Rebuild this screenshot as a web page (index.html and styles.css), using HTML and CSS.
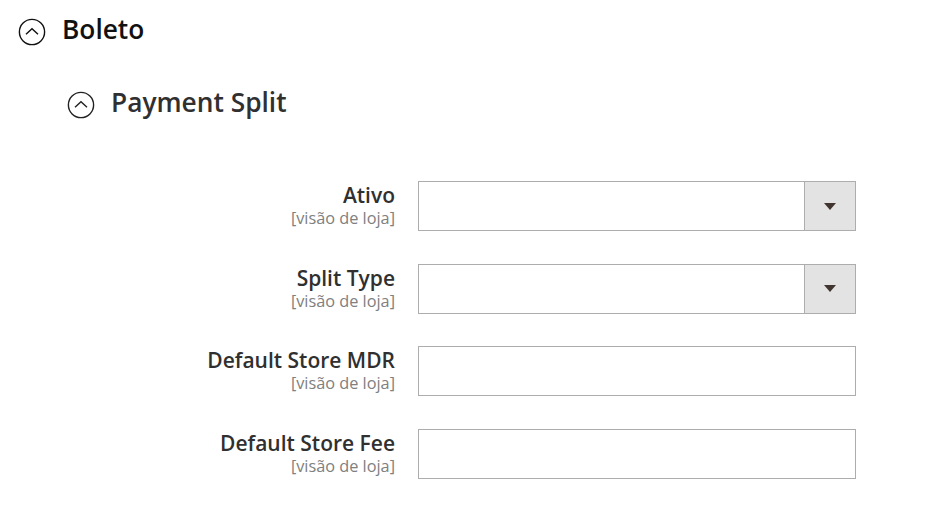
FILE: index.html
```html
<!DOCTYPE html>
<html>
<head>
<meta charset="utf-8">
<link rel="stylesheet" href="styles.css">
</head>
<body>
<div class="page">
  <div class="section-head top">
    <svg class="toggle" width="28" height="28" viewBox="0 0 28 28"><circle cx="14" cy="14" r="12.6" fill="none" stroke="#111" stroke-width="1.4"/><path d="M8 16.3 L14 10.8 L20 16.3" fill="none" stroke="#111" stroke-width="1.4"/></svg>
    <span class="title dark">Boleto</span>
  </div>
  <div class="section-head sub">
    <svg class="toggle" width="28" height="28" viewBox="0 0 28 28"><circle cx="14" cy="14" r="12.6" fill="none" stroke="#222" stroke-width="1.4"/><path d="M8 16.3 L14 10.8 L20 16.3" fill="none" stroke="#222" stroke-width="1.4"/></svg>
    <span class="title">Payment Split</span>
  </div>
  <div class="form">
    <div class="label"><span class="name">Ativo</span><span class="scope">[visão de loja]</span></div>
    <div class="control select"><span class="btn"><span class="arrow"></span></span></div>
    <div class="label"><span class="name">Split Type</span><span class="scope">[visão de loja]</span></div>
    <div class="control select"><span class="btn"><span class="arrow"></span></span></div>
    <div class="label"><span class="name">Default Store MDR</span><span class="scope">[visão de loja]</span></div>
    <div class="control"></div>
    <div class="label"><span class="name">Default Store Fee</span><span class="scope">[visão de loja]</span></div>
    <div class="control"></div>
  </div>
</div>
</body>
</html>
```
FILE: styles.css
```css
html, body { margin: 0; padding: 0; background: #fff; }
body { font-family: "Open Sans", sans-serif; color: #303030; }
.page { padding-top: 18px; }
.section-head { display: flex; align-items: center; }
.section-head.top { padding-left: 18px; height: 28px; }
.section-head.sub { padding-left: 67px; height: 28px; margin-top: 45px; }
.toggle { flex: none; }
.section-head.top .title { margin-left: 16px; }
.section-head.sub .title { margin-left: 16px; }
.title { font-size: 26.3px; font-weight: 600; line-height: 28px; padding-bottom: 6px; color: #303030; }
.title.dark { color: #111; }
.form { display: grid; grid-template-columns: 395px 438px; column-gap: 23px; row-gap: 32.67px; margin-top: 62px; }
.label { display: flex; flex-direction: column; align-items: flex-end; padding-top: 1px; }
.name { font-size: 21px; font-weight: 600; line-height: 26px; color: #303030; }
.scope { font-size: 16.3px; line-height: 20px; color: #808080; }
.control { height: 48px; border: 1px solid #adadad; background: #fff; display: flex; justify-content: flex-end; }
.btn { width: 50px; height: 100%; background: #e3e3e3; border-left: 1px solid #adadad; display: flex; align-items: center; justify-content: center; }
.arrow { width: 0; height: 0; border-left: 6px solid transparent; border-right: 6px solid transparent; border-top: 7px solid #41362f; }
```
